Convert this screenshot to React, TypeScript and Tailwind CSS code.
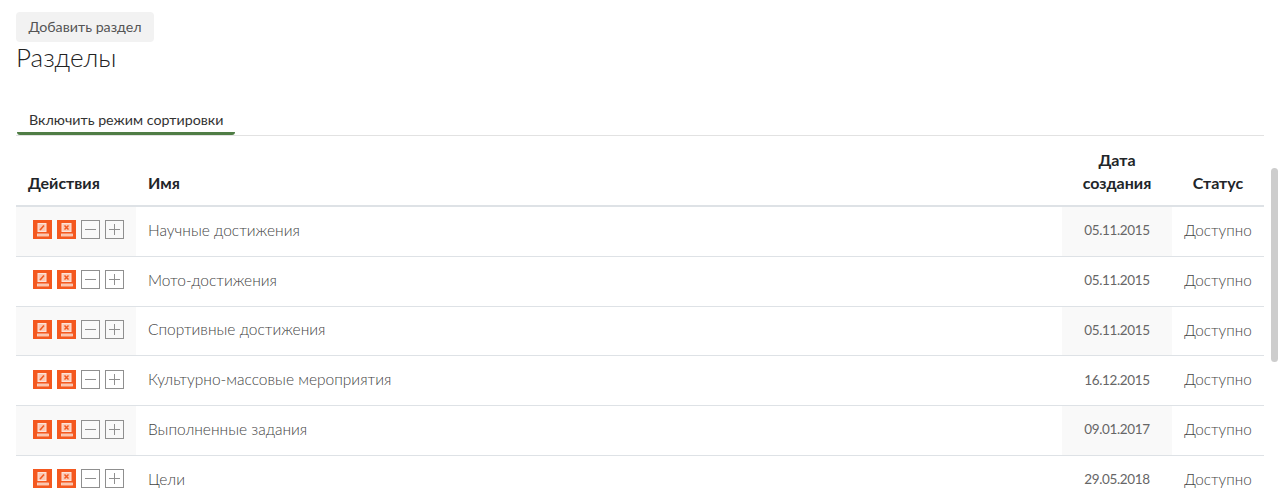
const ROWS = [
  { name: "Научные достижения", date: "05.11.2015" },
  { name: "Мото-достижения", date: "05.11.2015" },
  { name: "Спортивные достижения", date: "05.11.2015" },
  { name: "Культурно-массовые мероприятия", date: "16.12.2015" },
  { name: "Выполненные задания", date: "09.01.2017" },
  { name: "Цели", date: "29.05.2018" },
];

function EditIcon() {
  return (
    <svg width="19" height="19" viewBox="0 0 19 19" className="block">
      <rect width="19" height="19" fill="#f4581f" />
      <rect x="5" y="3.5" width="8" height="8" fill="#fbc9b5" stroke="#fde3d9" />
      <path d="M7 10 L11 5.5" stroke="#f4581f" strokeWidth="1.6" />
      <rect x="4.5" y="14" width="11" height="2" fill="#fbb79c" stroke="#fcd9cb" strokeWidth="0.8" />
    </svg>
  );
}

function DeleteIcon() {
  return (
    <svg width="19" height="19" viewBox="0 0 19 19" className="block">
      <rect width="19" height="19" fill="#f4581f" />
      <rect x="5" y="3.5" width="9" height="8" fill="#fbc9b5" stroke="#fde3d9" />
      <path d="M7.5 5.5 L11.5 9.5 M11.5 5.5 L7.5 9.5" stroke="#f4581f" strokeWidth="1.5" />
      <rect x="4.5" y="14" width="11" height="2" fill="#fbb79c" stroke="#fcd9cb" strokeWidth="0.8" />
    </svg>
  );
}

function BoxIcon({ plus }: { plus?: boolean }) {
  return (
    <svg width="19" height="19" viewBox="0 0 19 19" className="block">
      <rect x="0.5" y="0.5" width="18" height="18" fill="none" stroke="#8f8f8f" />
      <path d="M4 9.5 H15" stroke="#8f8f8f" />
      {plus && <path d="M9.5 4 V15" stroke="#8f8f8f" />}
    </svg>
  );
}

export default function App() {
  return (
    <div className="relative h-[499px] overflow-hidden bg-white pl-4 pr-4 pt-3 font-['Lato','Open_Sans',sans-serif] text-[#555]">
      {/* Add section */}
      <button className="block h-[30px] w-[138px] rounded-[4px] bg-[#f2f2f2] text-center text-[14.25px] text-[#555]">
        Добавить раздел
      </button>
      <h1 className="h-[38px] text-[26px] font-light leading-[31px] text-[#222]">Разделы</h1>

      {/* Sort toggle */}
      <div className="mt-[23px] h-[33px] border-b border-[#e2e2e2]">
        <button className="ml-px flex h-[32px] w-[218px] items-end rounded-b-[3px] border-b-[3px] border-[#4f7d45] pb-[2px] pl-3 text-[14.25px] text-[#333]">
          Включить режим сортировки
        </button>
      </div>

      {/* Sections table */}
      <table className="w-[1248px] table-fixed border-collapse text-[15.25px]">
        <colgroup>
          <col className="w-[120px]" />
          <col />
          <col className="w-[110px]" />
          <col className="w-[92px]" />
        </colgroup>
        <thead>
          <tr className="h-[70px] border-b-2 border-[#dee2e6] align-bottom text-[16px] text-[#212529]">
            <th className="pb-[11px] pl-3 text-left leading-[23px] font-bold">Действия</th>
            <th className="pb-[11px] pl-3 text-left leading-[23px] font-bold">Имя</th>
            <th className="pb-[11px] text-center leading-[23px] font-bold">
              Дата<br />создания
            </th>
            <th className="pb-[11px] text-center leading-[23px] font-bold">Статус</th>
          </tr>
        </thead>
        <tbody>
          {ROWS.map((row, i) => (
            <tr key={row.name} className={i === 0 ? "h-[50.4px] border-b border-[#dee2e6]" : "h-[49.75px] border-b border-[#dee2e6]"}>
              <td className={i % 2 === 0 ? "bg-[#f9f9f9] pb-[3px] pl-[17px]" : "pb-[3px] pl-[17px]"}>
                <div className="flex gap-[5px]">
                  <EditIcon />
                  <DeleteIcon />
                  <BoxIcon />
                  <BoxIcon plus />
                </div>
              </td>
              <td className="pb-[2px] pl-3 text-[15.5px] font-light text-[#444]">{row.name}</td>
              <td className={i % 2 === 0 ? "bg-[#f9f9f9] pb-[2px] text-center text-[13.5px] tracking-tight text-[#666]" : "pb-[2px] text-center text-[13.5px] tracking-tight text-[#666]"}>
                {row.date}
              </td>
              <td className="pb-[2px] text-center font-light text-[#444]">Доступно</td>
            </tr>
          ))}
        </tbody>
      </table>

      {/* Scrollbar thumb */}
      <div className="absolute top-[168px] left-[1271px] h-[194px] w-[7px] rounded-[4px] bg-[#cdcdcd]" />
    </div>
  );
}
